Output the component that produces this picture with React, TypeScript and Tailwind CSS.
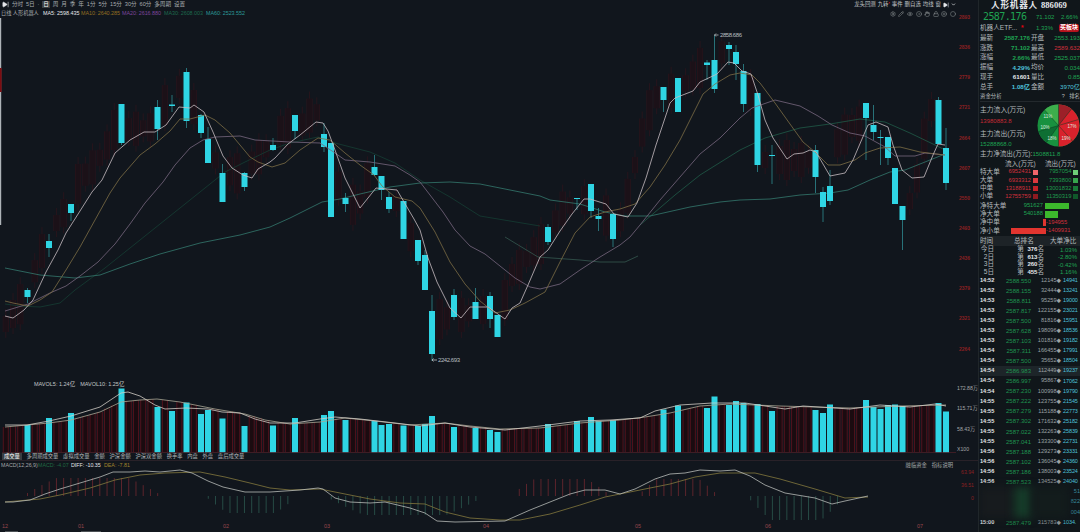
import { ChevronDown, CircleDot, Circle, Eye, Hand, Lock, Pencil, PlusCircle, Settings, SkipForward } from 'lucide-react';
import { clsx } from 'clsx';

type Point = [number, number];
// center x, body top, body bottom, high, low
type Candle = [number, number, number, number, number];

const STEP = 7.232;
const FIRST = 5.8;
const COUNT = 131;
const FONT = "font-['Liberation_Sans','Noto_Sans_CJK_SC',sans-serif]";

const candles: Candle[] = [
    [27.5, 290, 297, 288, 303], [49, 241, 248, 234, 257], [71, 204, 213, 204, 221], [121.5, 104, 143, 104, 145],
    [157.5, 107, 129, 100, 140], [172, 104.5, 106, 95, 112], [186.5, 72, 121, 68, 128], [201, 115, 133, 114, 138],
    [208, 139, 163, 127, 163], [222.5, 173, 202, 164, 202], [244.5, 173, 187, 172, 191], [273, 145, 150, 138, 151],
    [295, 115, 131, 115, 139], [324, 134, 147, 123, 152], [331, 143, 217, 143, 217], [345.5, 198, 204, 193, 212],
    [374.5, 167, 175, 155, 176], [381.5, 176, 190, 176, 200], [389, 197, 209, 192, 213], [403.5, 201, 239, 201, 239],
    [418, 240, 261, 240, 265], [425, 255, 290, 250, 290], [432, 311, 354, 295, 361], [454, 295, 317, 289, 320],
    [475.5, 302, 319, 288, 319], [490, 296, 319, 292, 328], [497.5, 315, 337, 315, 337], [548, 227, 242, 224, 245],
    [577, 198, 199, 198, 210], [591, 184, 211, 184, 218], [598.5, 216, 219, 208, 231], [613, 214, 239, 214, 247],
    [663.5, 87, 100, 87, 112], [678, 78, 112, 78, 112], [707, 62.5, 65, 60, 80], [714.5, 60, 89, 35, 93],
    [729, 45, 49, 42, 65], [736, 52, 64, 45, 80], [743.5, 71, 104, 64, 112], [757.5, 93, 165, 93, 172],
    [772, 155, 156, 145, 184], [815.5, 150, 177, 145, 193], [823, 192, 207, 187, 222], [830, 186, 201, 170, 205],
    [866, 103, 118, 103, 160], [873.5, 125, 132, 105, 140], [880.5, 137, 138, 130, 165], [888, 137, 158, 137, 165],
    [895, 168, 204, 168, 204], [902.5, 206, 220, 206, 250], [938.5, 100, 144, 97, 144], [946, 148, 183, 128, 190],
];

const volumes: Point[] = [
    [27.5, 425], [49, 418], [71, 413], [121.5, 388.5], [157.5, 407], [172, 411], [186.5, 402.5], [201, 414], [208, 410],
    [222.5, 418.5], [244.5, 426], [273, 425.5], [295, 418], [324, 415], [331, 411], [345.5, 420], [374.5, 421], [381.5, 425],
    [389, 424], [403.5, 425.5], [418, 426], [425, 424], [432, 416], [454, 427], [475.5, 428], [490, 430], [497.5, 432],
    [548, 424], [577, 421], [591, 417], [598.5, 421], [613, 420], [663.5, 409.5], [678, 405.5], [707, 408], [714.5, 396.5],
    [729, 405], [736, 401], [743.5, 403], [757.5, 404], [772, 411], [815.5, 410], [823, 413], [830, 404.5], [866, 400],
    [873.5, 407], [880.5, 409], [888, 405], [895, 404.5], [902.5, 406], [938.5, 403], [946, 411.5],
];

const rising: Point[] = [
    [5, 325], [27, 295], [40, 255], [55, 225], [66, 210], [80, 180], [95, 165], [105, 150], [114, 130], [150, 128], [165, 105],
    [178, 85], [193, 105], [215, 160], [235, 175], [262, 155], [280, 130], [302, 125], [314, 110], [320, 115], [338, 185],
    [352, 205], [360, 203], [367, 180], [395, 200], [412, 240], [440, 320], [461, 315], [483, 310], [505, 300], [512, 275],
    [530, 255], [545, 240], [563, 208], [585, 200], [605, 215], [620, 222], [628, 195], [635, 165], [645, 120], [655, 98],
    [684, 85], [700, 68], [720, 50], [750, 90], [765, 160], [808, 160], [836, 145], [857, 120], [908, 205], [915, 190],
    [922, 150], [930, 110], [946, 110],
];

const ma5: Point[] = [
    [5, 316], [13, 318], [24, 310], [33, 300], [46, 272], [58, 250], [66, 233], [80, 211], [92, 192], [102, 180], [115, 153],
    [130, 140], [144, 132], [155, 132], [166, 125], [179, 107], [190, 108], [194, 105], [204, 112], [213, 132], [223, 156],
    [232, 168], [243, 175], [252, 178], [258, 169], [270, 162], [275, 158], [288, 144], [300, 135], [316, 122], [323, 123],
    [328, 131], [335, 150], [345, 178], [360, 208], [376, 188], [397, 190], [404, 202], [414, 219], [420, 230], [428, 258],
    [437, 282], [450, 308], [461, 318], [470, 307], [488, 307], [505, 319], [512, 308], [520, 303], [528, 285], [540, 257],
    [548, 250], [560, 231], [572, 214], [584, 199], [590, 199], [606, 204], [614, 214], [628, 217], [637, 203], [646, 178],
    [656, 145], [670, 103], [675, 98], [693, 91], [700, 82], [717, 74], [728, 62], [734, 63], [742, 71], [751, 74], [758, 95],
    [765, 120], [773, 138], [787, 159], [794, 154], [803, 153], [810, 150], [816, 152], [830, 176], [845, 173], [853, 160],
    [868, 125], [876, 122], [888, 127], [893, 145], [902, 170], [912, 178], [924, 177], [933, 155], [938, 144], [945, 145],
];
const ma10: Point[] = [
    [5, 301], [13, 303], [28, 306], [40, 300], [52, 292], [66, 270], [80, 247], [95, 220], [110, 193], [120, 178], [140, 155],
    [155, 144], [170, 131], [180, 119], [190, 119], [205, 115], [215, 120], [230, 133], [240, 145], [250, 157], [258, 162],
    [272, 167], [285, 163], [300, 150], [318, 138], [330, 140], [345, 153], [360, 165], [374, 175], [382, 186], [395, 197],
    [412, 201], [420, 208], [435, 232], [450, 262], [465, 284], [480, 301], [495, 313], [510, 310], [525, 303], [545, 292],
    [560, 262], [575, 233], [590, 217], [605, 212], [620, 209], [635, 204], [650, 187], [665, 165], [680, 140], [695, 110],
    [703, 94], [715, 84], [730, 75], [740, 73], [752, 75], [760, 83], [775, 103], [790, 124], [803, 142], [815, 152],
    [828, 165], [840, 165], [855, 160], [865, 153], [880, 148], [900, 147], [920, 152], [945, 155],
];
const ma20: Point[] = [
    [5, 311], [28, 304], [50, 293], [66, 286], [80, 276], [98, 262], [115, 244], [130, 224], [145, 203], [163, 182], [175, 165],
    [190, 148], [203, 140], [215, 137], [240, 136], [255, 140], [290, 142], [320, 143], [335, 153], [345, 160], [370, 162],
    [395, 166], [410, 175], [420, 182], [430, 195], [443, 212], [455, 230], [470, 246], [485, 254], [500, 266], [515, 278],
    [530, 287], [540, 289], [560, 284], [580, 270], [600, 257], [620, 245], [630, 237], [640, 225], [660, 200], [680, 177],
    [700, 154], [720, 138], [740, 118], [752, 108], [775, 100], [800, 106], [818, 116], [832, 125], [850, 133], [865, 136],
    [885, 147], [895, 156], [915, 156], [925, 153], [945, 155],
];
const ma30a: Point[] = [
    [5, 304], [20, 306], [40, 307], [60, 303], [75, 290], [105, 268], [125, 252], [160, 224], [200, 192], [225, 172], [245, 162],
    [270, 150], [290, 143], [318, 137], [335, 143], [370, 152], [395, 163], [420, 180], [450, 197], [480, 216], [540, 226],
];
const ma30b: Point[] = [[505, 237], [538, 257], [580, 260], [600, 262], [625, 262], [638, 256]];
const ma30c: Point[] = [
    [640, 225], [675, 195], [700, 175], [740, 150], [765, 138], [800, 128], [830, 124], [860, 119], [885, 122], [910, 133], [935, 145], [945, 150],
];
const ma60: Point[] = [
    [5, 268], [20, 271], [40, 275], [75, 278], [100, 275], [130, 264], [160, 254], [200, 243], [240, 235], [270, 227], [290, 218],
    [310, 208], [322, 202], [340, 199], [360, 194], [390, 187], [420, 183], [450, 182], [480, 184], [510, 190], [540, 196],
    [550, 200], [580, 204], [605, 212], [625, 216], [650, 216], [690, 207], [720, 202], [740, 200], [770, 199], [800, 195],
    [830, 193], [848, 190], [870, 180], [890, 172], [905, 170], [925, 162], [945, 154],
];
const vol5: Point[] = [
    [5, 425], [27, 425], [49, 421], [71, 416], [100, 407], [121, 393], [128, 392], [140, 396], [155, 405], [165, 409], [186, 408],
    [208, 409], [222, 412], [240, 413], [255, 419], [270, 423], [295, 423], [320, 419], [335, 417], [360, 419], [395, 423], [420, 426],
    [445, 423], [470, 427], [505, 430], [540, 426], [580, 421], [610, 420], [640, 418], [655, 411], [680, 405], [712, 403],
    [745, 403], [785, 409], [803, 406], [850, 409], [880, 405], [910, 407], [935, 404], [946, 406],
];
const vol10: Point[] = [
    [5, 427], [49, 423], [71, 420], [100, 412], [121, 402], [140, 400], [157, 399], [180, 402], [200, 406], [215, 409], [245, 414],
    [265, 420], [290, 424], [320, 422], [345, 418], [375, 421], [410, 425], [445, 423], [470, 426], [500, 429], [540, 428], [580, 423],
    [620, 420], [645, 417], [670, 413], [700, 406], [730, 404], [780, 406], [850, 408], [900, 406], [946, 405],
];
const diff: Point[] = [
    [5, 502], [13, 502], [30, 500], [45, 494], [60, 489], [80, 483], [100, 477], [113, 472], [130, 472], [145, 471], [160, 472],
    [180, 470], [192, 473], [208, 481], [223, 487], [245, 492], [270, 492], [300, 490], [318, 488], [323, 489], [335, 498],
    [350, 502], [370, 503], [385, 502], [410, 508], [425, 513], [437, 521], [455, 522], [505, 521], [530, 510], [555, 500],
    [570, 494], [585, 490], [605, 490], [620, 494], [635, 489], [655, 479], [670, 474], [685, 473], [700, 470], [720, 471],
    [735, 470], [750, 476], [765, 485], [785, 493], [815, 498], [832, 504], [845, 501], [868, 496],
];
const dea: Point[] = [
    [5, 502], [40, 499], [60, 495], [90, 488], [115, 480], [140, 475], [165, 473], [200, 472], [225, 477], [250, 483], [270, 488],
    [290, 490], [320, 489], [340, 493], [370, 499], [400, 503], [425, 504], [445, 512], [470, 518], [500, 520], [520, 520],
    [550, 514], [580, 505], [605, 497], [620, 494], [645, 489], [670, 484], [695, 477], [720, 473], [755, 473], [780, 479],
    [815, 489], [845, 498], [868, 497],
];

// start x, end x, peak height; negative peaks hang below the zero line
const waves: [number, number, number][] = [
    [27, 158, 18], [208, 295, -17], [330, 480, -19], [513, 608, 17], [640, 716, 17], [750, 842, -24],
];

const periods = ['分时', '5日', '·', '日', '周', '月', '季', '年', '1分', '5分', '15分', '30分', '60分', '多周期', '设置'];
const volumeTabs = ['成交量', '多周期成交量', '虚拟成交量', '金额', '沪深金额', '沪深双金额', '换手率', '内盘', '外盘', '盘后成交量'];
const prices = ['2893', '2836', '2779', '2721', '2664', '2607', '2550', '2493', '2436', '2379', '2321', '2264'];
const months: [string, number][] = [['12', 5], ['01', 81], ['02', 226], ['03', 327], ['04', 486], ['05', 638], ['06', 768], ['07', 920]];

const quotes = [
    ['最新', '2587.176', 'text-[#1fa352]', '开盘', '2553.193', 'text-[#1fa352]'],
    ['涨跌', '71.102', 'text-[#1fa352]', '最高', '2589.632', 'text-[#d0303a]'],
    ['涨幅', '2.66%', 'text-[#1fa352]', '最低', '2525.037', 'text-[#1fa352]'],
    ['振幅', '4.29%', 'text-[#4fc4dc]', '均价', '0.034', 'text-[#1fa352]'],
    ['现手', '61601', 'text-gray-200', '量比', '0.85', 'text-[#1fa352]'],
    ['总手', '1.08亿', 'text-[#4fc4dc]', '金额', '3970亿', 'text-[#4fc4dc]'],
];
const flows = [
    ['特大单', '6952431', '7957054'],
    ['大单', '6933312', '7393800'],
    ['中单', '13188911', '13001832'],
    ['小单', '12755759', '11350319'],
];
const ranks = [
    ['今日', '376', '1.03%'],
    ['2日', '613', '-2.80%'],
    ['3日', '260', '-0.42%'],
    ['5日', '455', '1.16%'],
];
const ticks = [
    ['14:52', '2588.550', '12145', '14941'], ['14:52', '2588.155', '32444', '13241'], ['14:53', '2588.811', '95259', '19000'],
    ['14:53', '2587.817', '122155', '23021'], ['14:53', '2587.500', '81816', '15951'], ['14:53', '2587.628', '198096', '18536'],
    ['14:53', '2587.103', '101816', '19182'], ['14:54', '2587.311', '166455', '17991'], ['14:54', '2587.500', '35652', '18504'],
    ['14:54', '2586.983', '112449', '19237'], ['14:54', '2586.997', '95867', '17062'], ['14:54', '2587.230', '100998', '19790'],
    ['14:55', '2587.222', '123755', '21545'], ['14:55', '2587.279', '115188', '22773'], ['14:55', '2587.302', '171632', '25182'],
    ['14:55', '2587.022', '132263', '25839'], ['14:55', '2587.041', '133300', '22731'], ['14:56', '2587.188', '129273', '23331'],
    ['14:56', '2587.102', '136045', '24360'], ['14:56', '2587.186', '138003', '23524'], ['14:56', '2587.523', '134525', '24040'],
];

const toPoints = (line: Point[]) => line.map((p) => p.join(',')).join(' ');

function valueAt(line: Point[], x: number) {
    const next = line.findIndex((p) => p[0] >= x);
    if (next < 0) return line[line.length - 1][1];
    if (next === 0) return line[0][1];
    const [x0, y0] = line[next - 1];
    const [x1, y1] = line[next];
    return y0 + ((x - x0) / (x1 - x0)) * (y1 - y0);
}

const slots = Array.from({ length: COUNT }, (_, i) => FIRST + i * STEP);
const risingSlots = slots.filter((x) => !candles.some((c) => Math.abs(c[0] - x) < 3));

function Line({ data, className }: { data: Point[]; className: string }) {
    return <polyline points={toPoints(data)} fill="none" strokeWidth="0.8" className={className} />;
}

function PriceChart() {
    return (
        <svg viewBox="0 18 956 362" className="w-[956px] h-[362px] shrink-0">
            <rect x="0" y="18" width="1.2" height="207" fill="#aeb4b8" />
            <rect x="0" y="68" width="1.6" height="24" fill="#7c0d12" />
            {risingSlots.map((x, i) => {
                const y = valueAt(rising, x);
                const half = 8 + ((i * 7) % 5) * 3;
                return (
                    <g key={x} className="stroke-[#6b1019]" opacity="0.4">
                        <line x1={x} x2={x} y1={y - half - 7} y2={y + half + 6} strokeWidth="0.6" />
                        <path d={`M${x - 2.5} ${y - half}V${y + half}M${x + 2.5} ${y - half}V${y + half}`} strokeWidth="0.8" />
                        <rect x={x - 2.5} y={y - half} width="5" height={half * 2} fill="#2c0a12" stroke="none" />
                    </g>
                );
            })}
            <Line data={ma30a} className="stroke-[#153d34]" />
            <Line data={ma30b} className="stroke-[#35584f]" />
            <Line data={ma30c} className="stroke-[#1f5a48]" />
            <Line data={ma60} className="stroke-[#34786d]" />
            {candles.map(([x, top, bottom, high, low]) => (
                <g key={x}>
                    <line x1={x} x2={x} y1={high} y2={low} stroke="#2f8a90" strokeWidth="0.8" />
                    <rect x={x - 3} y={top} width="6" height={bottom - top} fill="#2fd5e4" />
                </g>
            ))}
            <Line data={ma20} className="stroke-[#77677f]" />
            <Line data={ma10} className="stroke-[#7c6d45]" />
            <Line data={ma5} className="stroke-[#c6bcc2]" />
            <path d="M432 360h5M433.5 358.5l-1.5 1.5 1.5 1.5M714.5 35h4M716 33.500l-1.500 1.500 1.500 1.500" fill="none" stroke="#b7bcc0" strokeWidth="0.8" />
            <text x="438" y="362.3" fontSize="6" fill="#b7bcc0" textLength="22">2242.693</text>
            <text x="720" y="37" fontSize="6" fill="#b7bcc0" textLength="22">2858.686</text>
        </svg>
    );
}

function VolumeChart() {
    return (
        <svg viewBox="0 387 956 66" className="w-[956px] h-[66px] shrink-0">
            {risingSlots.map((x) => {
                const y = valueAt(vol10, x);
                return (
                    <g key={x}>
                        <rect x={x - 2.5} y={y} width="5" height={452 - y} fill="#1a0b10" />
                        <path d={`M${x - 2.5} 452V${y}M${x + 2.5} 452V${y}`} stroke="#5f131e" strokeWidth="0.8" />
                    </g>
                );
            })}
            {volumes.map(([x, y]) => <rect key={x} x={x - 3} y={y} width="6" height={452.5 - y} fill="#2fd5e4" />)}
            <Line data={vol10} className="stroke-[#aaa794]" />
            <Line data={vol5} className="stroke-[#d0ccc4]" />
            <line x1="2" x2="956" y1="452.6" y2="452.6" stroke="#57232b" strokeWidth="0.7" />
        </svg>
    );
}

function MacdChart() {
    return (
        <svg viewBox="0 469 956 54" className="w-[956px] h-[54px] shrink-0">
            {slots.map((x) => {
                const wave = waves.find((w) => x >= w[0] && x <= w[1]);
                if (!wave) return null;
                const t = (x - wave[0]) / (wave[1] - wave[0]);
                const h = wave[2] * Math.min(1, Math.sin(Math.PI * t) * 1.3 + 0.15);
                return <line key={x} x1={x} x2={x} y1="496" y2={496 - h} strokeWidth="0.8" stroke={h > 0 ? '#702830' : '#2c594f'} />;
            })}
            <Line data={dea} className="stroke-[#84783d]" />
            <Line data={diff} className="stroke-[#b7bbb8]" />
        </svg>
    );
}

function Toolbar() {
    return (
        <div className="h-[18px] pr-[22px] flex justify-between text-[5.6px] leading-[9px] text-[#a7abad] whitespace-nowrap">
            <div>
                <div className="flex items-center gap-[2.9px] pl-[2px] h-[9px]">
                    <SkipForward size={7} className="fill-gray-200 text-gray-200" />
                    {periods.map((p) => (
                        <span key={p} className={clsx(p === '日' && 'bg-[#3c4043] text-white px-px leading-[7px]')}>{p}</span>
                    ))}
                </div>
                <div className="flex pl-[1px] text-[5.4px]">
                    <span className="w-[42px] text-[5.2px]">日线 人形机器人</span>
                    <span className="text-gray-200 w-[38px]">MA5: 2598.435</span>
                    <span className="text-[#946f22] w-[41px] tracking-[-0.05px]">MA10: 2640.285</span>
                    <span className="text-[#7c459c] w-[42px] tracking-[-0.05px]">MA20: 2616.880</span>
                    <span className="text-[#1d6a4d] w-[42px] tracking-[-0.05px]">MA30: 2608.003</span>
                    <span className="text-[#2b9998] tracking-[-0.05px]">MA60: 2523.552</span>
                </div>
            </div>
            <div className="flex flex-col items-end">
                <div className="flex items-center gap-[2px] h-[9px] text-[#c3c7c9] text-[5.4px]">
                    <span>龙头回测</span>
                    <span>九转<b className="text-red-600">'</b></span>
                    <span>事件</span>
                    <span>删自选</span>
                    <span>均线</span>
                    <span>窗</span>
                    <SkipForward size={6} className="fill-gray-200 text-gray-200" />
                    <ChevronDown size={5} strokeWidth={4} />
                </div>
                <div className="flex items-center gap-[2.6px] h-[9px] text-[#8c9295]">
                    <Settings size={6} /><Pencil size={6} /><Eye size={6} /><CircleDot size={6} /><Hand size={6} /><Lock size={6} /><PlusCircle size={6} /><Circle size={6} />
                </div>
            </div>
        </div>
    );
}

function FlowPie() {
    return (
        <svg viewBox="-21.5 -21.5 43 43" className="w-[43px] h-[43px] shrink-0">
            <circle r="21" fill="#18913f" />
            <path d="M0-21A21 21 0 0 1 0 21Z" fill="#d9222c" />
            <path d="M0 0V-21A21 21 0 0 1 13-16.5Z" fill="#9c2028" />
            <path d="M0 0-14-15.6A21 21 0 0 1 0-21Z" fill="#3dae4c" />
            <path d="M0 0-20 6A21 21 0 0 0-12 17Z" fill="#0e6f33" />
            <path d="M0 0-14-15.6M0 0-20 6M0 0-12 17M0 0 13-16.5M0 0 20-6M0 0 14 15.6M0-21V21" stroke="#0a3a20" strokeWidth="0.5" />
            <g fontSize="4.5" fill="#dfe8df">
                <text x="-15" y="-8">11%</text>
                <text x="-18" y="3">10%</text>
                <text x="-11" y="14">18%</text>
                <text x="3" y="14">19%</text>
                <text x="9" y="2">17%</text>
            </g>
        </svg>
    );
}

function NetRow({ label, value, start, width, up }: { label: string; value: string; start: number; width: number; up: boolean }) {
    return (
        <div className="flex items-center h-[8.4px]">
            <span className="w-[30px] shrink-0">{label}</span>
            {!up && <span className="shrink-0" style={{ width: start }} />}
            {up && <span className="w-[35px] pr-[2px] shrink-0 text-right text-[5.8px] text-[#1fa352]">{value}</span>}
            <i className={clsx('h-[6.5px] shrink-0', up ? 'bg-[#3cb82c]' : 'bg-[#e2352f]')} style={{ width }} />
            {!up && <span className="text-[5.8px] text-[#d0303a]">{value}</span>}
        </div>
    );
}

function TickRow({ row, active }: { row: string[]; active?: boolean }) {
    return (
        <div className={clsx('flex items-center h-[10.05px] text-[5.6px]', active && 'bg-[#1d2529]')}>
            <span className="w-[18px] shrink-0 font-bold text-gray-200">{row[0]}</span>
            <span className="w-[33px] shrink-0 text-right text-[6px] text-[#1f9450]">{row[1]}</span>
            <span className="w-[30px] shrink-0 text-right text-[#9da2a5]">{row[2]}<span className="text-[4.5px]">◆</span></span>
            <span className="pl-[2px] text-[5.5px] tracking-[-0.1px] text-[#4dc0dc]">{row[3]}</span>
        </div>
    );
}

function Sidebar() {
    return (
        <aside className="w-[102px] h-[532px] shrink-0 pl-px overflow-hidden border-l border-[#20262a] bg-[#10161a] text-[6.6px] leading-none whitespace-nowrap text-[#b4b9bc]">
            <div className="h-[10px] pl-[11px] flex items-center text-[8.6px] font-bold text-gray-200 font-['Liberation_Serif','Noto_Sans_CJK_SC',serif]">
                <span className="tracking-[0.8px] pr-[3px]">人形机器人</span>886069
            </div>
            <div className="h-[13px] pl-[3px] flex items-center text-[#1fa352]">
                <span className="text-[10px] w-[53px] font-['DejaVu_Sans_Mono','Liberation_Mono',monospace] tracking-[-0.6px]">2587.176</span>
                <span className="w-[25px] text-[6px]">71.102</span>
                <span className="text-[6px]">2.66%</span>
            </div>
            <div className="h-[10px] flex items-center">
                <span className="w-[56px]">机器人ETF...<b className="text-red-600 pl-1">*</b></span>
                <span className="w-[23px] text-[6px] text-[#1fa352]">1.33%</span>
                <span className="h-[7.5px] w-[20px] text-center rounded-xs bg-[#b6121c] text-[6px] leading-[7.5px] font-bold text-white">买板块</span>
            </div>
            {quotes.map(([a, av, ac, b, bv, bc]) => (
                <div key={a} className="h-[9.9px] flex items-center">
                    <span className="w-[15px] shrink-0">{a}</span>
                    <span className={clsx('w-[36px] shrink-0 pr-px text-right font-bold text-[6.2px]', ac)}>{av}</span>
                    <span className="w-[15px] shrink-0">{b}</span>
                    <span className={clsx('grow text-right text-[6.2px]', bc)}>{bv}</span>
                </div>
            ))}
            <div className="h-[10px] flex items-center justify-between border-b border-[#23292d] text-[5.4px]">
                <span>资金分析</span>
                <span>? &nbsp; 排名</span>
            </div>
            <div className="h-[47px] flex items-center justify-between">
                <div className="flex flex-col text-[6.8px] pt-[2px]">
                    <span className="h-[12px] leading-[12px]">主力流入(万元)</span>
                    <span className="h-[11px] leading-[10px] text-[6px] text-[#c52b35]">13980883.8</span>
                    <span className="h-[12px] leading-[13px]">主力流出(万元)</span>
                    <span className="h-[10px] leading-[10px] text-[6px] text-[#1fa352]">15288868.0</span>
                </div>
                <FlowPie />
            </div>
            <div className="h-[10px] flex items-center">主力净流出(万元):<span className="text-[6px] text-[#1fa352]">1508811.8</span></div>
            <div className="h-[9px] flex items-center pl-[25px]">
                <span className="w-[40px]">流入(万元)</span>
                <span>流出(万元)</span>
            </div>
            {flows.map(([label, inflow, outflow], i) => (
                <div key={label} className="h-[8.1px] flex items-center">
                    <span className="w-[20px] shrink-0">{label}</span>
                    <span className="w-[31px] shrink-0 text-right text-[5.8px] text-[#d0303a]">{inflow}</span>
                    <i className={clsx('size-[5px] ml-[1.5px] shrink-0', ['bg-[#f0666b]', 'bg-[#dc3a3f]', 'bg-[#c12228]', 'bg-[#8d1a20]'][i])} />
                    <span className="w-[34px] shrink-0 text-right text-[5.8px] text-[#1f9a4c]">{outflow}</span>
                    <i className={clsx('size-[5px] ml-[1.5px] shrink-0', ['bg-[#6fce78]', 'bg-[#37a54d]', 'bg-[#187a37]', 'bg-[#10582a]'][i])} />
                </div>
            ))}
            <div className="pt-[1px]">
                <NetRow label="净特大单" value="951627" start={0} width={24} up />
                <NetRow label="净大单" value="540188" start={0} width={13} up />
                <NetRow label="净中单" value="-194955" start={33} width={3} up={false} />
                <NetRow label="净小单" value="-1409931" start={1} width={35} up={false} />
            </div>
            <div className="h-[9.5px] mt-px flex items-center bg-[#1d2327]">
                <span className="w-[34px]">时间</span>
                <span className="w-[36px]">总排名</span>
                <span>大单净比</span>
            </div>
            {ranks.map(([day, place, ratio]) => (
                <div key={day} className="h-[7.5px] flex items-center">
                    <span className="w-[14px] text-right shrink-0">{day}</span>
                    <span className="w-[50px] text-right shrink-0">第&nbsp; <b className="text-[6px] text-gray-200">{place}</b>名</span>
                    <span className="w-[33px] text-right shrink-0 text-[6px] text-[#1fa352]">{ratio}</span>
                </div>
            ))}
            {ticks.map((row, i) => <TickRow key={i} row={row} active={i === 9} />)}
            <div className="h-[31px] -ml-px flex">
                <div className="w-[35px] bg-[#171b1e] blur-xs" />
                <div className="w-[18px] bg-[#163b29] blur-xs" />
                <div className="w-[36px] bg-[#131c1c] blur-xs" />
                <div className="grow flex flex-col justify-around text-right text-[5.6px] text-[#378a9f]">
                    <span>51</span>
                    <span>822</span>
                    <span>004</span>
                </div>
            </div>
            <TickRow row={['15:00', '2587.479', '315783', '1034.']} />
        </aside>
    );
}

export default function App() {
    return (
        <div className={clsx('flex w-[1080px] h-[532px] overflow-hidden bg-[#11161d]', FONT)}>
            <main className="w-[978px] shrink-0 flex flex-col">
                <Toolbar />
                <div className="flex h-[362px]">
                    <PriceChart />
                    <div className="w-[14px] -mt-[5px] flex flex-col items-end text-[5px] font-bold text-[#8a2022]">
                        {prices.map((p) => <span key={p} className="h-[30.15px] leading-[9px] shrink-0">{p}</span>)}
                    </div>
                </div>
                <div className="h-[7px] pl-[34px] flex gap-[5px] text-[5.5px] leading-[8px] text-[#c3c7c9] whitespace-nowrap">
                    <span>MAVOL5: 1.24亿</span>
                    <span>MAVOL10: 1.25亿</span>
                </div>
                <div className="flex h-[66px]">
                    <VolumeChart />
                    <div className="flex flex-col justify-between pl-[1px] text-[5.2px] leading-[7px] text-[#a3a7a9] whitespace-nowrap -mt-[2px]">
                        <span>172.88万</span>
                        <span>115.71万</span>
                        <span>58.43万</span>
                        <span>X100</span>
                    </div>
                </div>
                <div className="h-[8px] flex items-center gap-[4.7px] pl-[2px] text-[5.3px] leading-[7px] text-[#b3b7b9] whitespace-nowrap border-b border-[#292128]">
                    {volumeTabs.map((t, i) => <span key={t} className={clsx(i === 0 && 'bg-[#393e42] text-white px-[2px]')}>{t}</span>)}
                </div>
                <div className="h-[8px] flex items-center gap-[3px] pl-[1px] pr-[25px] text-[5.3px] leading-[8px] text-[#a3a7a9] whitespace-nowrap">
                    <span className="w-[34px]">MACD(12,26,9)</span>
                    <span className="text-[#1f6a43] w-[30px]">MACD: -4.07</span>
                    <span className="text-gray-200 w-[30px]">DIFF: -10.35</span>
                    <span className="text-[#a0852d]">DEA: -7.81</span>
                    <span className="ml-auto pr-[2px]">融临资金</span>
                    <span>指标说明</span>
                </div>
                <div className="flex h-[54px]">
                    <MacdChart />
                    <div className="flex flex-col gap-[6px] w-[18px] text-right text-[5.2px] leading-[7px] text-[#8a2022]">
                        <span>63.94</span>
                        <span>36.51</span>
                        <span>0</span>
                    </div>
                </div>
                <svg viewBox="0 523 978 9" className="w-[978px] h-[9px]">
                    {months.map(([m, x]) => <text key={m} x={x} y="528" fontSize="5.5" textAnchor="middle" fill="#98454c">{m}</text>)}
                    <path d="M5 531.5h13M81 531.5h20" stroke="#4b5054" />
                </svg>
            </main>
            <Sidebar />
        </div>
    );
}
